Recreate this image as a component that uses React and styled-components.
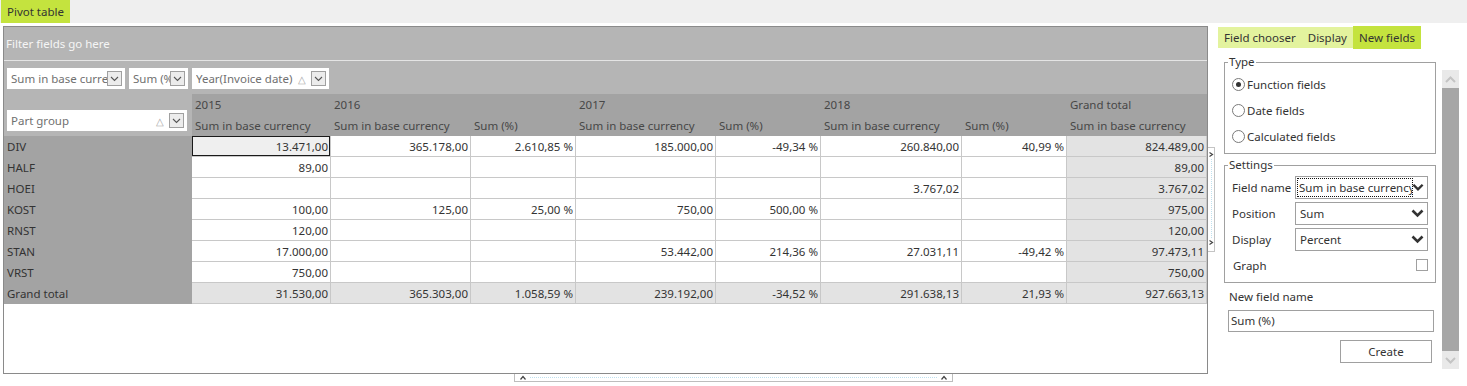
import React from 'react';
import styled, { createGlobalStyle, css } from 'styled-components';

const GlobalStyle = createGlobalStyle`
  html, body { margin: 0; padding: 0; background: #fff; }
  body {
    font-family: "Segoe UI", "Noto Sans", sans-serif;
    font-size: 11.5px;
    color: #333;
  }
  * { box-sizing: border-box; }
`;

const TopBar = styled.div`
  height: 23px;
  background: #efefef;
  display: flex;
  padding-left: 1px;
`;
const PageTab = styled.div`
  background: #c4e33e;
  height: 23px;
  line-height: 23px;
  padding: 0 6px;
  color: #333;
`;

const MainRow = styled.div`
  display: flex;
  align-items: flex-start;
  margin-top: 3px;
`;

const PivotPanel = styled.div`
  margin-left: 3px;
  width: 1205px;
  height: 348px;
  border: 1px solid #8a8a8a;
  background: #fff;
  display: flex;
  flex-direction: column;
  overflow: hidden;
`;
const FilterArea = styled.div`
  height: 34px;
  line-height: 33px;
  background: #b5b5b5;
  color: #f5f5f5;
  padding-left: 2px;
  border-bottom: 1px solid #e4e4e4;
`;
const FieldsArea = styled.div`
  height: 33px;
  background: #b5b5b5;
  display: flex;
  gap: 4px;
  padding: 7px 3px 0;
`;

const Chip = styled.div`
  width: ${p => p.$w}px;
  height: 21px;
  background: #fff;
  display: flex;
  align-items: center;
  padding: 0 3px 0 4px;
  color: #707070;
  white-space: nowrap;
`;
const ChipText = styled.span`
  flex: 1;
  overflow: hidden;
`;
const SortMark = styled.span`
  color: #a8a8a8;
  font-size: 10px;
  margin-right: 5px;
`;
const ChipButton = styled.span`
  width: 15px;
  height: 15px;
  border: 1px solid #a0a0a0;
  background: #ececec;
  display: flex;
  align-items: center;
  justify-content: center;
  flex: none;
`;

const Grid = styled.table`
  border-collapse: separate;
  border-spacing: 0;
  table-layout: fixed;
  width: 1203px;
`;
const Corner = styled.td`
  background: #b5b5b5;
  vertical-align: bottom;
  padding: 0 0 5px 3px;
`;
const HeadCell = styled.td`
  background: #a3a3a3;
  color: #474747;
  height: 21px;
  padding: 0 0 0 3px;
  white-space: nowrap;
  overflow: hidden;
`;
const RowHead = styled.td`
  background: #a3a3a3;
  color: #333;
  height: 21px;
  padding: 0 0 0 3px;
  white-space: nowrap;
`;
const Cell = styled.td`
  height: 21px;
  padding: 0 2px 0 0;
  text-align: right;
  color: #333;
  white-space: nowrap;
  border-right: 1px solid #c8c8c8;
  border-bottom: 1px solid #c8c8c8;
  background: ${p => (p.$total ? '#e3e3e3' : '#fff')};
  ${p =>
    p.$selected &&
    css`
      background: #efefef;
      box-shadow: inset 0 0 0 1px #1a1a1a;
    `}
`;

const VSplitter = styled.div`
  margin-top: 121px;
  width: 7px;
  height: 105px;
  border: 1px solid #c4c4c4;
  border-left: none;
  background: #fff;
  display: flex;
  flex-direction: column;
  align-items: center;
  justify-content: space-between;
  padding: 4px 0 6px;
`;
const DotLine = styled.div`
  flex: 1;
  width: 0;
  border-left: 1px dotted #bfe0ee;
  margin: 2px 0;
`;

const SidePanel = styled.div`
  width: 252px;
  display: flex;
  flex-direction: column;
`;
const Tabs = styled.div`
  display: flex;
  align-items: center;
  height: 23px;
  margin-left: 3px;
`;
const SideTab = styled.div`
  height: ${p => (p.$active ? 23 : 21)}px;
  line-height: ${p => (p.$active ? 23 : 21)}px;
  padding: 0 6px;
  background: ${p => (p.$active ? '#c4e33e' : '#e3f39e')};
  color: #333;
`;
const SideBody = styled.div`
  display: flex;
  align-items: flex-start;
`;
const Form = styled.div`
  margin-left: 9px;
  width: 212px;
  display: flex;
  flex-direction: column;
`;
const Group = styled.fieldset`
  margin: ${p => p.$top}px 0 0;
  border: 1px solid #a0a0a0;
  padding: 1px 7px 4px;
  min-width: 0;
`;
const Legend = styled.legend`
  padding: 0 1px;
  margin-left: -4px;
  line-height: 16px;
  color: #333;
`;
const RadioRow = styled.div`
  height: 26px;
  display: flex;
  align-items: center;
  gap: 2px;
`;
const RadioDot = styled.span`
  width: 13px;
  height: 13px;
  border-radius: 50%;
  border: 1px solid #7a7a7a;
  display: flex;
  align-items: center;
  justify-content: center;
  &::after {
    content: '';
    width: 5px;
    height: 5px;
    border-radius: 50%;
    background: ${p => (p.$on ? '#333' : 'transparent')};
  }
`;
const FieldRow = styled.div`
  height: 26px;
  display: flex;
  align-items: center;
`;
const FieldLabel = styled.span`
  width: 63px;
  flex: none;
  padding-left: ${p => (p.$indent ? 1 : 0)}px;
`;
const Select = styled.div`
  width: 133px;
  height: 23px;
  border: 1px solid #a0a0a0;
  display: flex;
  align-items: center;
  padding: 0 3px 0 2px;
`;
const SelectText = styled.span`
  flex: 1;
  overflow: hidden;
  white-space: nowrap;
  padding-left: 2px;
  ${p =>
    p.$focus &&
    css`
      flex: none;
      width: 114px;
      margin-right: auto;
      padding-left: 1px;
      line-height: 17px;
      outline: 1px dotted #111;
    `}
`;
const CheckBox = styled.span`
  width: 12px;
  height: 12px;
  border: 1px solid #a0a0a0;
  margin-left: auto;
`;
const PlainLabel = styled.div`
  margin: 5px 0 0 5px;
  line-height: 18px;
`;
const Input = styled.div`
  margin: 4px 0 0 4px;
  width: 206px;
  height: 22px;
  border: 1px solid #a0a0a0;
  line-height: 20px;
  padding-left: 2px;
`;
const Button = styled.div`
  align-self: flex-end;
  margin: 8px 4px 0 0;
  width: 92px;
  height: 23px;
  border: 1px solid #a0a0a0;
  text-align: center;
  line-height: 21px;
  color: #333;
`;

const Scrollbar = styled.div`
  margin: 21px 0 0 6px;
  width: 17px;
  height: 299px;
  display: flex;
  flex-direction: column;
`;
const ScrollButton = styled.div`
  height: 18px;
  background: #e9e9e9;
  display: flex;
  align-items: center;
  justify-content: center;
`;
const ScrollThumb = styled.div`
  flex: 1;
  background: #a6a6a6;
`;

const HSplitter = styled.div`
  margin-left: 514px;
  width: 439px;
  height: 8px;
  border: 1px solid #bdbdbd;
  border-top: none;
  display: flex;
  align-items: center;
  padding: 0 5px;
`;
const HDotLine = styled.div`
  flex: 1;
  height: 0;
  border-top: 1px dotted #bfe0ee;
  margin: 0 4px;
`;

const SmallChevron = () => (
  <svg width="9" height="6" viewBox="0 0 9 6">
    <polyline points="1,1 4.5,4.5 8,1" fill="none" stroke="#555" strokeWidth="1.1" />
  </svg>
);
const BoldChevron = () => (
  <svg width="13" height="9" viewBox="0 0 13 9">
    <polyline points="1.5,1.5 6.5,6.5 11.5,1.5" fill="none" stroke="#333" strokeWidth="2.6" />
  </svg>
);
const ScrollArrow = ({ up }) => (
  <svg width="11" height="7" viewBox="0 0 11 7">
    <polyline
      points={up ? '1,6 5.5,1.5 10,6' : '1,1 5.5,5.5 10,1'}
      fill="none"
      stroke="#c4c4c4"
      strokeWidth="2"
    />
  </svg>
);
const Caret = ({ dir }) => (
  <svg width="6" height="5" viewBox="0 0 6 5">
    <polyline
      points={dir === 'up' ? '0.5,4.5 3,1.5 5.5,4.5' : '1.5,0.5 4.5,2.5 1.5,4.5'}
      fill="none"
      stroke="#444"
      strokeWidth="1.2"
    />
  </svg>
);

const FieldChip = ({ w, label, sort }) => (
  <Chip $w={w}>
    <ChipText>{label}</ChipText>
    {sort && <SortMark>△</SortMark>}
    <ChipButton>
      <SmallChevron />
    </ChipButton>
  </Chip>
);

const colWidths = [188, 139, 140, 105, 140, 105, 141, 105, 140];

const rows = [
  ['DIV', '13.471,00', '365.178,00', '2.610,85 %', '185.000,00', '-49,34 %', '260.840,00', '40,99 %', '824.489,00'],
  ['HALF', '89,00', '', '', '', '', '', '', '89,00'],
  ['HOEI', '', '', '', '', '', '3.767,02', '', '3.767,02'],
  ['KOST', '100,00', '125,00', '25,00 %', '750,00', '500,00 %', '', '', '975,00'],
  ['RNST', '120,00', '', '', '', '', '', '', '120,00'],
  ['STAN', '17.000,00', '', '', '53.442,00', '214,36 %', '27.031,11', '-49,42 %', '97.473,11'],
  ['VRST', '750,00', '', '', '', '', '', '', '750,00'],
];
const grandTotal = ['Grand total', '31.530,00', '365.303,00', '1.058,59 %', '239.192,00', '-34,52 %', '291.638,13', '21,93 %', '927.663,13'];

const measures = [
  'Sum in base currency',
  'Sum in base currency',
  'Sum (%)',
  'Sum in base currency',
  'Sum (%)',
  'Sum in base currency',
  'Sum (%)',
  'Sum in base currency',
];

const App = () => {
  return (
    <>
      <GlobalStyle />
      <TopBar>
        <PageTab>Pivot table</PageTab>
      </TopBar>
      <MainRow>
        <PivotPanel>
          <FilterArea>Filter fields go here</FilterArea>
          <FieldsArea>
            <FieldChip w={118} label="Sum in base currency" />
            <FieldChip w={59} label="Sum (%)" />
            <FieldChip w={137} label="Year(Invoice date)" sort />
          </FieldsArea>
          <Grid>
            <colgroup>
              {colWidths.map((w, i) => (
                <col key={i} style={{ width: w }} />
              ))}
            </colgroup>
            <tbody>
              <tr>
                <Corner rowSpan={2}>
                  <FieldChip w={180} label="Part group" sort />
                </Corner>
                <HeadCell>2015</HeadCell>
                <HeadCell colSpan={2}>2016</HeadCell>
                <HeadCell colSpan={2}>2017</HeadCell>
                <HeadCell colSpan={2}>2018</HeadCell>
                <HeadCell>Grand total</HeadCell>
              </tr>
              <tr>
                {measures.map((m, i) => (
                  <HeadCell key={i}>{m}</HeadCell>
                ))}
              </tr>
              {rows.map((r, ri) => (
                <tr key={r[0]}>
                  <RowHead>{r[0]}</RowHead>
                  {r.slice(1).map((v, ci) => (
                    <Cell key={ci} $total={ci === 7} $selected={ri === 0 && ci === 0}>
                      {v}
                    </Cell>
                  ))}
                </tr>
              ))}
              <tr>
                <RowHead>{grandTotal[0]}</RowHead>
                {grandTotal.slice(1).map((v, ci) => (
                  <Cell key={ci} $total>
                    {v}
                  </Cell>
                ))}
              </tr>
            </tbody>
          </Grid>
        </PivotPanel>
        <VSplitter>
          <Caret dir="right" />
          <DotLine />
          <Caret dir="right" />
        </VSplitter>
        <SidePanel>
          <Tabs>
            <SideTab>Field chooser</SideTab>
            <SideTab>Display</SideTab>
            <SideTab $active>New fields</SideTab>
          </Tabs>
          <SideBody>
            <Form>
              <Group $top={5}>
                <Legend>Type</Legend>
                <RadioRow>
                  <RadioDot $on />
                  Function fields
                </RadioRow>
                <RadioRow>
                  <RadioDot />
                  Date fields
                </RadioRow>
                <RadioRow>
                  <RadioDot />
                  Calculated fields
                </RadioRow>
              </Group>
              <Group $top={3}>
                <Legend>Settings</Legend>
                <FieldRow>
                  <FieldLabel>Field name</FieldLabel>
                  <Select>
                    <SelectText $focus>Sum in base currency</SelectText>
                    <BoldChevron />
                  </Select>
                </FieldRow>
                <FieldRow>
                  <FieldLabel>Position</FieldLabel>
                  <Select>
                    <SelectText>Sum</SelectText>
                    <BoldChevron />
                  </Select>
                </FieldRow>
                <FieldRow>
                  <FieldLabel>Display</FieldLabel>
                  <Select>
                    <SelectText>Percent</SelectText>
                    <BoldChevron />
                  </Select>
                </FieldRow>
                <FieldRow>
                  <FieldLabel $indent>Graph</FieldLabel>
                  <CheckBox />
                </FieldRow>
              </Group>
              <PlainLabel>New field name</PlainLabel>
              <Input>Sum (%)</Input>
              <Button>Create</Button>
            </Form>
            <Scrollbar>
              <ScrollButton>
                <ScrollArrow up />
              </ScrollButton>
              <ScrollThumb />
              <ScrollButton>
                <ScrollArrow />
              </ScrollButton>
            </Scrollbar>
          </SideBody>
        </SidePanel>
      </MainRow>
      <HSplitter>
        <Caret dir="up" />
        <HDotLine />
        <Caret dir="up" />
      </HSplitter>
    </>
  );
};

export default App;
